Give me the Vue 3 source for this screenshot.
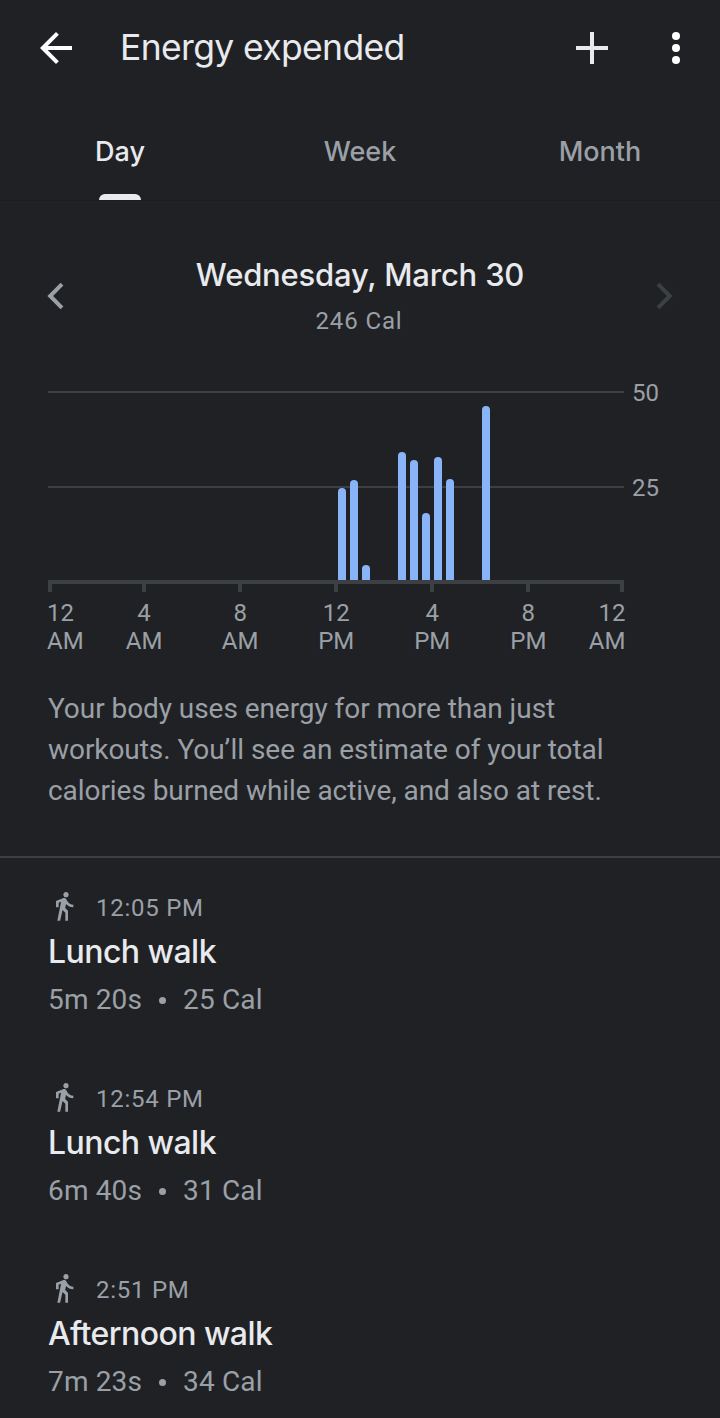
<template>
  <main class="screen">
    <header class="app-bar">
      <button class="icon-button" aria-label="Back">
        <svg width="48" height="48" viewBox="0 0 24 24" fill="#fff">
          <path d="M20 11H7.83l5.59-5.59L12 4l-8 8 8 8 1.41-1.41L7.83 13H20v-2z" />
        </svg>
      </button>
      <h1>Energy expended</h1>
      <button class="icon-button" aria-label="Add">
        <svg width="48" height="48" viewBox="0 0 24 24" fill="#e8eaed">
          <path d="M20 13h-7v7h-2v-7H4v-2h7V4h2v7h7v2z" />
        </svg>
      </button>
      <button class="icon-button more" aria-label="More options">
        <svg width="48" height="48" viewBox="0 0 24 24" fill="#fff">
          <circle cx="12" cy="6" r="2" />
          <circle cx="12" cy="12" r="2" />
          <circle cx="12" cy="18" r="2" />
        </svg>
      </button>
    </header>

    <nav class="tabs">
      <button
        v-for="tab in tabs"
        :key="tab"
        class="tab"
        :class="{ active: tab === activeTab }"
        @click="activeTab = tab"
      >
        <span>{{ tab }}</span>
      </button>
    </nav>

    <section class="date-row">
      <button class="icon-button" aria-label="Previous day">
        <svg width="32" height="32" viewBox="0 0 32 32" fill="none" stroke="#9aa0a6" stroke-width="4">
          <path d="M22 4.2L10.2 16 22 27.8" />
        </svg>
      </button>
      <div class="date">
        <h2>Wednesday, March 30</h2>
        <p>246 Cal</p>
      </div>
      <button class="icon-button" aria-label="Next day" disabled>
        <svg width="32" height="32" viewBox="0 0 32 32" fill="none" stroke="#3c4043" stroke-width="4">
          <path d="M10 4.2L21.8 16 10 27.8" />
        </svg>
      </button>
    </section>

    <section class="chart">
      <div class="chart-body">
        <div class="plot">
          <div v-for="(value, i) in slots" :key="i" class="slot">
            <div v-if="value" class="bar" :style="{ height: (value / 50) * 100 + '%' }"></div>
          </div>
        </div>
        <div class="y-axis">
          <span>50</span>
          <span>25</span>
        </div>
      </div>
      <div class="ticks">
        <i v-for="n in 7" :key="n"></i>
      </div>
      <div class="x-axis">
        <span v-for="(label, i) in hours" :key="i">{{ label[0] }}<br />{{ label[1] }}</span>
      </div>
    </section>

    <p class="description">
      Your body uses energy for more than just<br />
      workouts. You’ll see an estimate of your total<br />
      calories burned while active, and also at rest.
    </p>

    <ul class="activities">
      <li v-for="item in activities" :key="item.time">
        <div class="time">
          <svg width="32" height="32" viewBox="0 0 24 24" fill="#9aa0a6">
            <path
              d="M13.5 5.5c1.1 0 2-.9 2-2s-.9-2-2-2-2 .9-2 2 .9 2 2 2zM9.8 8.9L7 23h2.1l1.8-8 2.1 2v6h2v-7.5l-2.1-2 .6-3C14.8 12 16.8 13 19 13v-2c-1.9 0-3.5-1-4.3-2.4l-1-1.6c-.4-.6-1-1-1.7-1-.3 0-.5.1-.8.1L6 8.3V13h2V9.6l1.8-.7z"
            />
          </svg>
          <span>{{ item.time }}</span>
        </div>
        <h3>{{ item.title }}</h3>
        <div class="stats">
          <span>{{ item.duration }}</span>
          <span class="dot"></span>
          <span>{{ item.calories }} Cal</span>
        </div>
      </li>
    </ul>
  </main>
</template>

<script setup>
import { ref } from 'vue'

const tabs = ['Day', 'Week', 'Month']
const activeTab = ref('Day')

// Calories per half hour, keyed by slot index (0 = midnight)
const energy = {
  24: 24.4,
  25: 26.4,
  26: 3.9,
  29: 33.8,
  30: 31.7,
  31: 17.7,
  32: 32.5,
  33: 26.7,
  36: 46.1
}
const slots = Array.from({ length: 48 }, (_, i) => energy[i] || 0)

const hours = [
  ['12', 'AM'],
  ['4', 'AM'],
  ['8', 'AM'],
  ['12', 'PM'],
  ['4', 'PM'],
  ['8', 'PM'],
  ['12', 'AM']
]

const activities = [
  { time: '12:05 PM', title: 'Lunch walk', duration: '5m 20s', calories: 25 },
  { time: '12:54 PM', title: 'Lunch walk', duration: '6m 40s', calories: 31 },
  { time: '2:51 PM', title: 'Afternoon walk', duration: '7m 23s', calories: 34 }
]
</script>

<style>
body {
  background: #202125;
}
</style>

<style scoped>
.screen {
  height: 1418px;
  overflow: hidden;
  background: #202125;
  color: #9aa0a6;
  font-family: Roboto, sans-serif;
}

h1,
h2,
h3,
p,
ul {
  margin: 0;
  padding: 0;
}

button {
  border: none;
  padding: 0;
  background: none;
  color: inherit;
}

svg {
  display: block;
}

.app-bar {
  display: flex;
  align-items: center;
  height: 96px;
  padding: 0 20px 0 32px;
}

.app-bar h1 {
  flex: 1;
  margin-left: 40px;
  color: #e8eaed;
  font-family: Inter, sans-serif;
  font-size: 35.5px;
  font-weight: 400;
  letter-spacing: -0.65px;
  line-height: 48px;
  white-space: nowrap;
}

.more {
  margin-left: 36px;
}

.tabs {
  display: flex;
  height: 104px;
  border-bottom: 1px solid #1c1d20;
}

.tab {
  flex: 1;
  display: flex;
  flex-direction: column;
  align-items: center;
  padding-top: 36px;
  font-family: Inter, sans-serif;
  font-size: 27px;
  font-weight: 500;
  line-height: 40px;
}

.tab.active {
  color: #e8eaed;
}

.tab.active::after {
  content: '';
  width: 42px;
  height: 6px;
  margin-top: auto;
  border-radius: 6px 6px 0 0;
  background: #e8eaed;
}

.date-row {
  display: flex;
  justify-content: space-between;
  align-items: center;
  height: 80px;
  padding: 55px 40px 0;
}

.date {
  text-align: center;
}

.date h2 {
  color: #e8eaed;
  font-family: Inter, sans-serif;
  font-size: 31px;
  font-weight: 500;
  letter-spacing: -0.2px;
  line-height: 38px;
}

.date p {
  margin-top: 12px;
  padding-right: 2px;
  font-size: 24px;
  letter-spacing: 0.9px;
  line-height: 30px;
}

.chart {
  margin: 55px 48px 0;
}

.chart-body {
  display: flex;
  height: 189px;
}

.plot {
  flex: none;
  display: flex;
  width: 576px;
  background: linear-gradient(#3c4043, #3c4043) 0 0 / 100% 2px no-repeat,
    linear-gradient(#3c4043, #3c4043) 0 95px / 100% 2px no-repeat;
}

.slot {
  display: flex;
  align-items: flex-end;
  justify-content: center;
  width: 12px;
}

.bar {
  width: 8px;
  border-radius: 4px 4px 0 0;
  background: #8ab4f8;
}

.y-axis {
  display: flex;
  flex-direction: column;
  gap: 67px;
  margin: -12px 0 0 8px;
  font-size: 24px;
  line-height: 28px;
}

.ticks {
  display: flex;
  gap: 92px;
  width: 576px;
  border-top: 4px solid #3c4043;
}

.ticks i {
  flex: none;
  width: 4px;
  height: 8px;
  background: #3c4043;
}

/* the outer ticks stay inside the axis ends */
.ticks i:first-child {
  margin-right: -2px;
}

.ticks i:last-child {
  margin-left: -2px;
}

.x-axis {
  display: flex;
  justify-content: space-between;
  width: 578.4px;
  margin-top: 7px;
  margin-left: -1px;
  font-size: 24px;
  line-height: 28px;
}

.x-axis span {
  width: 96px;
  text-align: center;
}

.x-axis span:first-child {
  width: 49px;
  text-align: left;
}

.x-axis span:last-child {
  width: 49px;
  text-align: right;
}

.description {
  margin: 33px 48px 0;
  font-size: 28px;
  letter-spacing: -0.06px;
  line-height: 41px;
  white-space: nowrap;
}

.activities {
  margin-top: 45px;
  padding: 32px 48px 0;
  border-top: 2px solid #3c4043;
  list-style: none;
}

.activities li {
  height: 191px;
}

.time {
  display: flex;
  align-items: center;
  gap: 16px;
  height: 32px;
  font-size: 24px;
  letter-spacing: 0.75px;
}

.time span {
  padding-top: 4px;
}

.activities h3 {
  margin-top: 10px;
  color: #e8eaed;
  font-family: Inter, sans-serif;
  font-size: 32px;
  font-weight: 500;
  letter-spacing: -0.55px;
  line-height: 40px;
}

.stats {
  display: flex;
  align-items: center;
  margin-top: 9px;
  font-size: 28px;
  letter-spacing: 0.15px;
  line-height: 38px;
}

.dot {
  width: 7px;
  height: 7px;
  margin: 0 17px;
  border-radius: 50%;
  background: #9aa0a6;
}
</style>
